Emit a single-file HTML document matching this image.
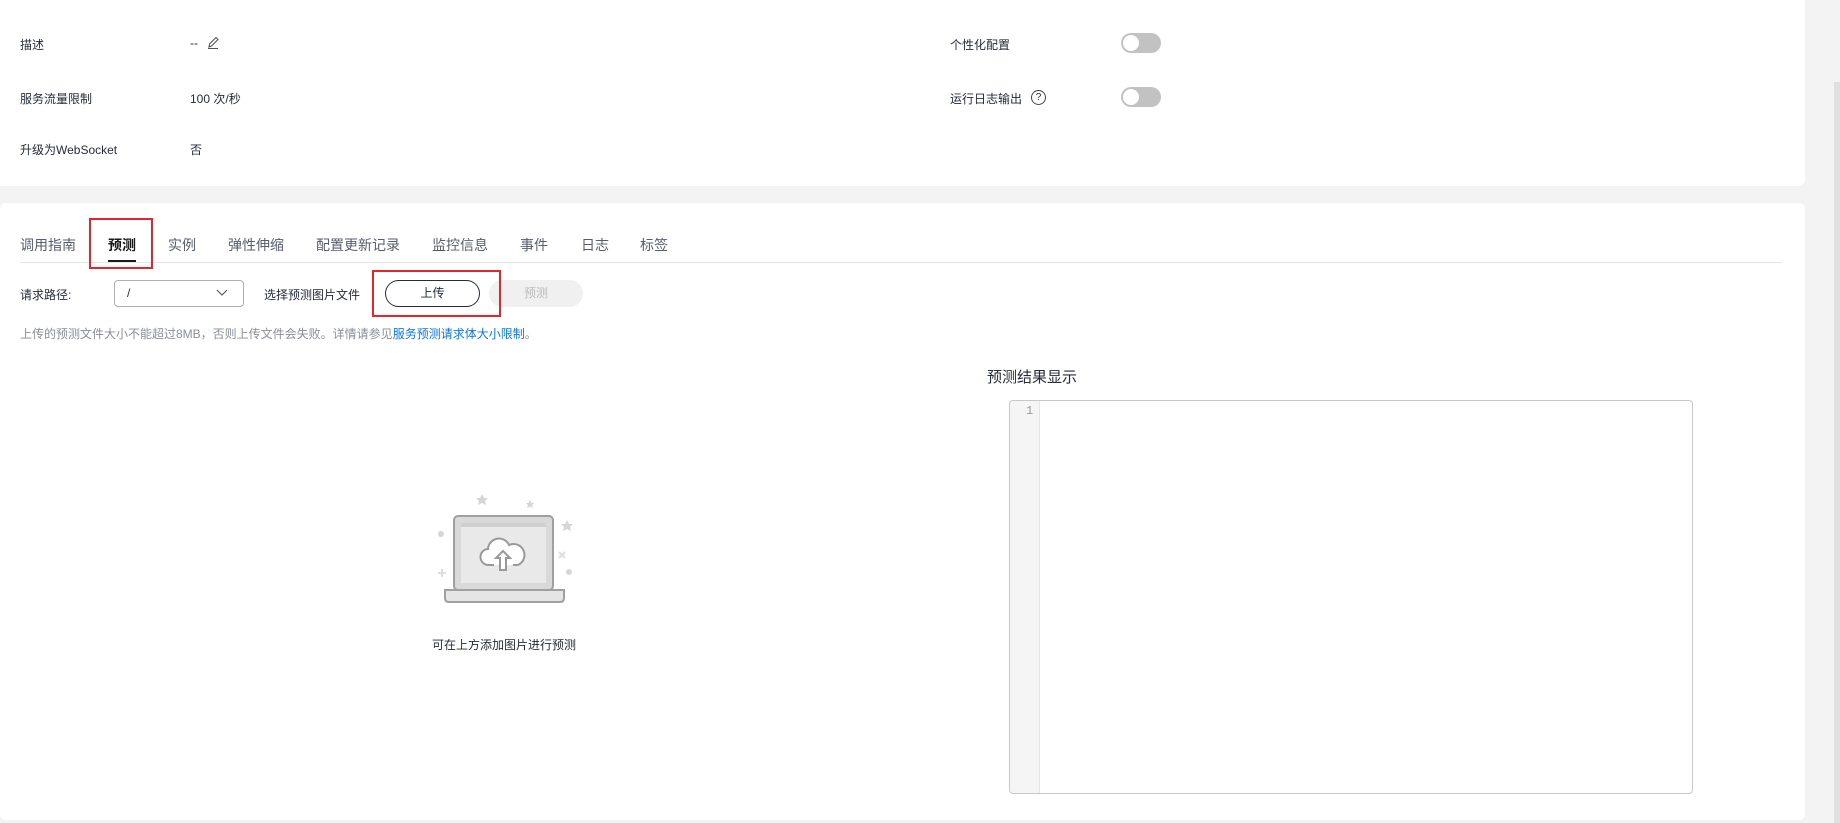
<!DOCTYPE html>
<html><head><meta charset="utf-8"><style>
*{box-sizing:border-box;margin:0;padding:0}
body{width:1840px;height:823px;background:#f3f3f3;font-family:"Liberation Sans","Noto Sans CJK SC",sans-serif;color:#252b3a;font-size:12px;position:relative;overflow:hidden}
.abs{position:absolute;white-space:nowrap}
.card{position:absolute;background:#fff;border-radius:0 0 6px 0}
.tog{position:absolute;width:40px;height:20px;border-radius:10px;background:#c2c2c2}
.tog:after{content:"";position:absolute;left:2px;top:2px;width:16px;height:16px;border-radius:50%;background:#fff}
.tab{position:absolute;top:235px;font-size:14px;color:#575d6c}
</style></head><body>
<div class="card" style="left:0;top:0;width:1805px;height:186px"></div>
<div class="card" style="left:0;top:203px;width:1805px;height:617px;border-radius:6px"></div>
<div class="abs" style="left:1834px;top:82px;width:6px;height:741px;background:#e0e0e0"></div>

<div class="abs" style="left:20px;top:36px">描述</div>
<div class="abs" style="left:190px;top:36px">--</div>
<svg class="abs" style="left:206px;top:35px" width="14" height="15" viewBox="0 0 14 15"><path d="M3 12 L3.5 9 L10 2.5 L12 4.5 L5.5 11 Z M2 13.5 H12" fill="none" stroke="#555" stroke-width="1.1"/></svg>
<div class="abs" style="left:20px;top:90px">服务流量限制</div>
<div class="abs" style="left:190px;top:90px">100 次/秒</div>
<div class="abs" style="left:20px;top:141px">升级为WebSocket</div>
<div class="abs" style="left:190px;top:141px">否</div>
<div class="abs" style="left:950px;top:36px">个性化配置</div>
<div class="tog" style="left:1121px;top:33px"></div>
<div class="abs" style="left:950px;top:90px">运行日志输出</div>
<div class="abs" style="left:1031px;top:90px;width:15px;height:15px;border:1px solid #444;border-radius:50%;font-size:10px;text-align:center;line-height:13px">?</div>
<div class="tog" style="left:1121px;top:87px"></div>

<div class="tab" style="left:20px">调用指南</div>
<div class="tab" style="left:108px;color:#191919;font-weight:bold">预测</div>
<div class="tab" style="left:168px">实例</div>
<div class="tab" style="left:228px">弹性伸缩</div>
<div class="tab" style="left:316px">配置更新记录</div>
<div class="tab" style="left:432px">监控信息</div>
<div class="tab" style="left:520px">事件</div>
<div class="tab" style="left:581px">日志</div>
<div class="tab" style="left:640px">标签</div>
<div class="abs" style="left:20px;top:262px;width:1762px;height:1px;background:#e5e5e5"></div>
<div class="abs" style="left:108px;top:260px;width:28px;height:2px;background:#191919"></div>
<div class="abs" style="left:89px;top:218px;width:64px;height:51px;border:2px solid #e4262a"></div>

<div class="abs" style="left:20px;top:286px">请求路径:</div>
<div class="abs" style="left:114px;top:280px;width:130px;height:27px;border:1px solid #adb0b8;border-radius:4px"></div>
<div class="abs" style="left:127px;top:286px">/</div>
<svg class="abs" style="left:216px;top:288px" width="12" height="10"><path d="M1 2 L6 7 L11 2" fill="none" stroke="#575d6c" stroke-width="1.2"/></svg>
<div class="abs" style="left:264px;top:286px">选择预测图片文件</div>
<div class="abs" style="left:385px;top:280px;width:95px;height:27px;border:1px solid #252b3a;border-radius:14px;text-align:center;line-height:25px">上传</div>
<div class="abs" style="left:489px;top:280px;width:94px;height:27px;background:#f0f0f0;border-radius:14px;text-align:center;line-height:27px;color:#bbb">预测</div>
<div class="abs" style="left:372px;top:270px;width:129px;height:47px;border:2px solid #e4262a"></div>
<div class="abs" style="left:20px;top:325px;color:#8a8e99">上传的预测文件大小不能超过8MB，否则上传文件会失败。详情请参见<span style="color:#0d75e8">服务预测请求体大小限制</span>。</div>

<svg class="abs" style="left:430px;top:494px" width="150" height="115" viewBox="0 0 150 115">
<g fill="#d6d6d6"><circle cx="11" cy="40" r="3"/><circle cx="139" cy="78" r="3"/><path d="M52 0 l2 4 4 0 -3 3 1 4 -4-2 -4 2 1-4 -3-3 4 0z"/><path d="M100 6 l1.5 3 3 0 -2.5 2 1 3 -3-1.5 -3 1.5 1-3 -2.5-2 3 0z"/><path d="M137 26 l2 4 4 0 -3 3 1 4 -4-2 -4 2 1-4 -3-3 4 0z"/><path d="M8 79 h8 M12 75 v8" stroke="#ddd" stroke-width="2"/><path d="M129 58 l6 6 M135 58 l-6 6" stroke="#ddd" stroke-width="2"/></g>
<rect x="24" y="22" width="99" height="74" rx="4" fill="#d9d9d9" stroke="#a0a0a0" stroke-width="2"/>
<rect x="31" y="29" width="85" height="60" fill="#e9e9e9"/>
<rect x="31" y="29" width="85" height="4" fill="#cfcfcf"/>
<path d="M15 96 H134 V104 Q134 108 130 108 H19 Q15 108 15 104 Z" fill="#e5e5e5" stroke="#a0a0a0" stroke-width="2"/>
<path d="M64 71 h-5 a8 8 0 0 1 -1 -16 a11 11 0 0 1 21 -4 a9 9 0 0 1 9 20 h-5" fill="#fff" stroke="#999" stroke-width="2"/>
<path d="M70 76 v-12 h-4 l7 -7 7 7 h-4 v12z" fill="#fff" stroke="#999" stroke-width="2"/>
</svg>
<div class="abs" style="left:432px;top:636px;color:#252b3a">可在上方添加图片进行预测</div>

<div class="abs" style="left:987px;top:366px;font-size:15px">预测结果显示</div>
<div class="abs" style="left:1009px;top:400px;width:684px;height:394px;border:1px solid #c8c8c8;border-radius:4px;overflow:hidden">
<div style="position:absolute;left:0;top:0;width:30px;height:100%;background:#f5f5f5;border-right:1px solid #e5e5e5"></div>
<div style="position:absolute;left:16px;top:3px;color:#999;font-family:'Liberation Mono',monospace;font-size:12px">1</div>
</div>
</body></html>
